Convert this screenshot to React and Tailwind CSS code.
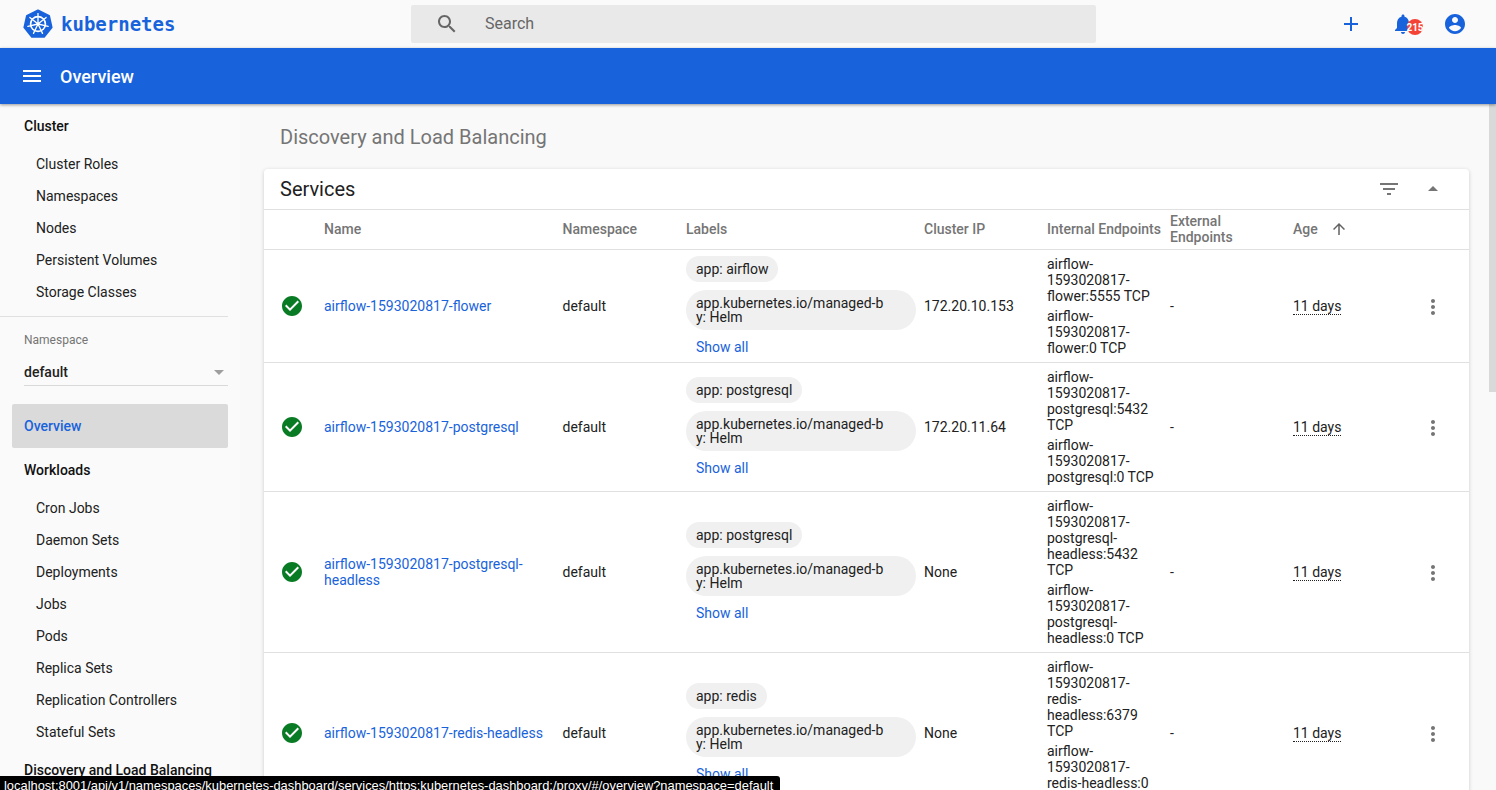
const ICONS = {
  add: "M19 13h-6v6h-2v-6H5v-2h6V5h2v6h6v2z",
  bell: "M12 22c1.1 0 2-.9 2-2h-4c0 1.1.9 2 2 2zm6-6v-5c0-3.07-1.63-5.64-4.5-6.32V4c0-.83-.67-1.5-1.5-1.5s-1.5.67-1.5 1.5v.68C7.64 5.36 6 7.92 6 11v5l-2 2v1h16v-1l-2-2z",
  account: "M12 2C6.48 2 2 6.48 2 12s4.48 10 10 10 10-4.48 10-10S17.52 2 12 2zm0 3c1.66 0 3 1.34 3 3s-1.34 3-3 3-3-1.34-3-3 1.34-3 3-3zm0 14.2c-2.5 0-4.71-1.28-6-3.22.03-1.99 4-3.08 6-3.08 1.99 0 5.97 1.09 6 3.08-1.29 1.94-3.5 3.22-6 3.22z",
  search: "M15.5 14h-.79l-.28-.27C15.41 12.59 16 11.11 16 9.5 16 5.91 13.09 3 9.5 3S3 5.91 3 9.5 5.91 16 9.5 16c1.61 0 3.09-.59 4.23-1.57l.27.28v.79l5 4.99L20.49 19l-4.99-5zm-6 0C7.01 14 5 11.99 5 9.5S7.01 5 9.5 5 14 7.01 14 9.5 11.99 14 9.5 14z",
  check: "M12 2C6.48 2 2 6.48 2 12s4.48 10 10 10 10-4.48 10-10S17.52 2 12 2zm-2 15l-5-5 1.41-1.41L10 14.17l7.59-7.59L19 8l-9 9z",
  filter: "M10 18h4v-2h-4v2zM3 6v2h18V6H3zm3 7h12v-2H6v2z",
  dropUp: "M7 14l5-5 5 5z",
  arrowUp: "M4 12l1.41 1.41L11 7.83V20h2V7.83l5.58 5.59L20 12l-8-8-8 8z",
  more: "M12 8c1.1 0 2-.9 2-2s-.9-2-2-2-2 .9-2 2 .9 2 2 2zm0 2c-1.1 0-2 .9-2 2s.9 2 2 2 2-.9 2-2-.9-2-2-2zm0 6c-1.1 0-2 .9-2 2s.9 2 2 2 2-.9 2-2-.9-2-2-2z",
  menu: "M3 18h18v-2H3v2zm0-5h18v-2H3v2zm0-7v2h18V6H3z",
};

const ROW_GRID =
  "grid grid-cols-[60px_238.5px_123.5px_238px_123px_123px_123px_123px_1fr] border-b border-[#e0e0e0]";

const CLUSTER = ["Cluster Roles", "Namespaces", "Nodes", "Persistent Volumes", "Storage Classes"];
const WORKLOADS = [
  "Cron Jobs",
  "Daemon Sets",
  "Deployments",
  "Jobs",
  "Pods",
  "Replica Sets",
  "Replication Controllers",
  "Stateful Sets",
];

const SERVICES = [
  {
    name: "airflow-1593020817-flower",
    app: "airflow",
    ip: "172.20.10.153",
    endpoints: ["airflow-1593020817-flower:5555 TCP", "airflow-1593020817-flower:0 TCP"],
  },
  {
    name: "airflow-1593020817-postgresql",
    app: "postgresql",
    ip: "172.20.11.64",
    endpoints: ["airflow-1593020817-postgresql:5432 TCP", "airflow-1593020817-postgresql:0 TCP"],
  },
  {
    name: "airflow-1593020817-postgresql-headless",
    app: "postgresql",
    ip: "None",
    endpoints: [
      "airflow-1593020817-postgresql-headless:5432 TCP",
      "airflow-1593020817-postgresql-headless:0 TCP",
    ],
  },
  {
    name: "airflow-1593020817-redis-headless",
    app: "redis",
    ip: "None",
    endpoints: [
      "airflow-1593020817-redis-headless:6379 TCP",
      "airflow-1593020817-redis-headless:0 TCP",
    ],
  },
];

function Icon({ d, className }) {
  return (
    <svg className={className} viewBox="0 0 24 24" fill="currentColor">
      <path d={d} />
    </svg>
  );
}

function Logo() {
  const spokes = [0, 1, 2, 3, 4, 5, 6].map((i) => (i * 2 * Math.PI) / 7);
  return (
    <svg className="w-[30px] h-[30px] shrink-0" viewBox="0 0 30 30">
      <polygon
        points="15,1.5 26,6.8 28.6,18.4 21,27.8 9,27.8 1.4,18.4 4,6.8"
        fill="#1863dc"
        stroke="#1863dc"
        strokeWidth="2"
        strokeLinejoin="round"
      />
      <circle cx="15" cy="15" r="7.4" fill="none" stroke="#fff" strokeWidth="1.7" />
      <circle cx="15" cy="15" r="1.7" fill="#fff" />
      {spokes.map((a) => (
        <line
          key={a}
          x1={15}
          y1={15}
          x2={15 + 10.4 * Math.sin(a)}
          y2={15 - 10.4 * Math.cos(a)}
          stroke="#fff"
          strokeWidth="1.3"
          strokeLinecap="round"
        />
      ))}
    </svg>
  );
}

function NavItem({ children }) {
  return <div className="h-8 pl-9 flex items-center text-sm text-[#212121]">{children}</div>;
}

function NavHeading({ children }) {
  return <div className="h-8 pl-6 flex items-center text-sm font-medium text-[#111]">{children}</div>;
}

function Sidebar() {
  return (
    <aside className="w-[240px] shrink-0 pt-1.5 bg-[#fafafa]">
      <NavHeading>Cluster</NavHeading>
      <div className="mt-1.5">
        {CLUSTER.map((item) => (
          <NavItem key={item}>{item}</NavItem>
        ))}
      </div>
      <div className="w-[228px] mt-2 border-t border-[#e0e0e0]" />
      <div className="w-[228px] pl-6 pt-4">
        <div className="text-xs leading-[14px] text-[#757575]">Namespace</div>
        <div className="mt-3 h-[27px] flex items-center justify-between border-b border-[#d9d9d9] text-sm font-medium text-[#212121]">
          default
          <span className="w-0 h-0 border-x-[5px] border-x-transparent border-t-[5px] border-t-[#9e9e9e] mr-[4px]" />
        </div>
      </div>
      <div className="w-[216px] h-11 ml-3 mt-[18px] pl-3 flex items-center rounded-[2px] bg-[#dadada] text-sm font-medium text-[#1863dc]">
        Overview
      </div>
      <div className="mt-1.5">
        <NavHeading>Workloads</NavHeading>
      </div>
      <div className="mt-1.5">
        {WORKLOADS.map((item) => (
          <NavItem key={item}>{item}</NavItem>
        ))}
      </div>
      <div className="mt-1.5">
        <NavHeading>Discovery and Load Balancing</NavHeading>
      </div>
    </aside>
  );
}

function Chip({ children, wide }) {
  return (
    <div
      className={`${wide ? "w-[230px] pr-8" : "w-fit pr-2.5"} pl-2.5 py-1.5 rounded-[20px] bg-[#f0f0f0] text-sm leading-[14px] break-all text-[#212121]`}
    >
      {children}
    </div>
  );
}

function ServiceRow({ service }) {
  return (
    <div className={`${ROW_GRID} text-sm text-[#212121]`}>
      <div className="pl-4 flex items-center">
        <Icon d={ICONS.check} className="w-6 h-6 text-[#0a7b25]" />
      </div>
      <div className="pr-4 flex items-center leading-4 text-[#1863dc]">{service.name}</div>
      <div className="flex items-center">default</div>
      <div className="flex flex-col justify-center gap-2">
        <Chip>app: {service.app}</Chip>
        <Chip wide>app.kubernetes.io/managed-by: Helm</Chip>
        <div className="pl-2.5 h-[18px] leading-[18px] text-[#1863dc]">Show all</div>
      </div>
      <div className="flex items-center">{service.ip}</div>
      <div className="py-1.5 pr-2 flex flex-col justify-center gap-1 leading-4">
        {service.endpoints.map((ep) => (
          <div key={ep} className="break-words">
            {ep}
          </div>
        ))}
      </div>
      <div className="flex items-center">-</div>
      <div className="pt-0.5 flex items-center">
        <span className="leading-[15px] border-b border-dotted border-[#212121]">11 days</span>
      </div>
      <div className="pt-0.5 pr-6 flex items-center justify-end">
        <Icon d={ICONS.more} className="w-6 h-6 text-[#757575]" />
      </div>
    </div>
  );
}

function ServicesCard() {
  return (
    <section className="mt-5 rounded-t-[4px] bg-white shadow-[0_1px_4px_rgba(0,0,0,0.18)]">
      <div className="h-[41px] pl-4 pr-6 flex items-center justify-between border-b border-[#e0e0e0]">
        <h2 className="text-xl text-[#212121]">Services</h2>
        <div className="flex items-center gap-5 text-[#757575]">
          <Icon d={ICONS.filter} className="w-6 h-6" />
          <Icon d={ICONS.dropUp} className="w-6 h-6" />
        </div>
      </div>
      <div className={`${ROW_GRID} h-10 pb-0.5 items-center text-sm font-medium leading-4 text-[#757575]`}>
        <div />
        <div>Name</div>
        <div>Namespace</div>
        <div>Labels</div>
        <div>Cluster IP</div>
        <div className="pr-2">Internal Endpoints</div>
        <div className="pr-2">External Endpoints</div>
        <div className="flex items-center">
          Age
          <Icon d={ICONS.arrowUp} className="w-[18px] h-[18px] ml-[12px] text-[#616161]" />
        </div>
        <div />
      </div>
      {SERVICES.map((service) => (
        <ServiceRow key={service.name} service={service} />
      ))}
    </section>
  );
}

export default function App() {
  return (
    <div className="relative h-[790px] overflow-hidden flex flex-col bg-[#f9f9f9] [font-family:Roboto,sans-serif]">
      <header className="h-12 shrink-0 flex items-center bg-[#fafafa]">
        <div className="w-[411px] shrink-0 pl-[23px] flex items-center gap-2">
          <Logo />
          <span className="text-[19px] font-bold text-[#1863dc] [font-family:'DejaVu_Sans_Mono',monospace]">
            kubernetes
          </span>
        </div>
        <div className="w-[685px] h-[38px] pl-6 flex items-center gap-[26px] rounded-[2px] bg-[#e9e9e9] text-base text-[#666]">
          <Icon d={ICONS.search} className="w-6 h-6 text-[#666]" />
          Search
        </div>
        <div className="flex-1 pr-[29px] flex items-center justify-end gap-7 text-[#1863dc]">
          <Icon d={ICONS.add} className="w-6 h-6" />
          <div className="relative w-6 h-6">
            <Icon d={ICONS.bell} className="w-6 h-6" />
            <span className="absolute left-4 top-[7px] w-4 h-4 rounded-full bg-[#f44336] flex items-center justify-center text-[10px] font-bold text-white">
              215
            </span>
          </div>
          <Icon d={ICONS.account} className="w-6 h-6" />
        </div>
      </header>

      <div className="relative z-10 h-14 shrink-0 pl-5 flex items-center gap-4 bg-[#1863dc] shadow-[0_1px_3px_rgba(0,0,0,0.4)]">
        <Icon d={ICONS.menu} className="w-6 h-6 text-white" />
        <span className="pt-0.5 text-lg font-medium text-white">Overview</span>
      </div>

      <div className="flex-1 min-h-0 flex">
        <Sidebar />
        <main className="flex-1 min-w-0 pl-6 pr-5 pt-[21px]">
          <h1 className="text-xl leading-6 pl-4 text-[#757575]">Discovery and Load Balancing</h1>
          <ServicesCard />
        </main>
        <div className="w-[7px] h-[288px] shrink-0 bg-[#d9d9d9]" />
      </div>

      {/* browser link preview */}
      <div className="absolute left-0 bottom-0 h-3.5 w-[780px] px-1 rounded-tr-[3px] bg-black whitespace-nowrap overflow-hidden text-[12.9px] leading-[20px] text-white [font-family:'Liberation_Sans',sans-serif]">
        localhost:8001/api/v1/namespaces/kubernetes-dashboard/services/https:kubernetes-dashboard:/proxy/#/overview?namespace=default
      </div>
    </div>
  );
}
